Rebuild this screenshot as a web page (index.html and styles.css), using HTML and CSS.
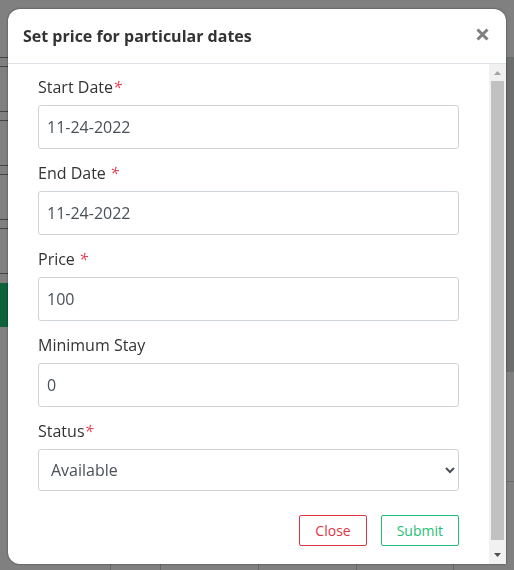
FILE: index.html
```html
<!DOCTYPE html>
<html lang="en">
<head>
  <meta charset="UTF-8" />
  <meta name="viewport" content="width=device-width, initial-scale=1.0"/>
  <title>Set price for particular dates</title>
  <link rel="stylesheet" href="styles.css">
</head>
<body>
  <div class="page" aria-hidden="true">
    <div class="page-top">
      <div class="page-form">
        <div class="page-field page-field-first"></div>
        <div class="page-field"></div>
        <div class="page-field"></div>
        <div class="page-field"></div>
        <div class="page-field"></div>
        <div class="page-button"></div>
      </div>
      <div class="page-side">
        <div class="page-photo"></div>
        <div class="page-line"></div>
      </div>
    </div>
    <div class="page-calendar">
      <span></span><span></span><span></span><span></span><span></span>
    </div>
  </div>

  <div class="modal" role="dialog" aria-labelledby="modalTitle">
    <div class="modal-header">
      <h1 class="modal-title" id="modalTitle">Set price for particular dates</h1>
      <button type="button" class="modal-x" aria-label="Dismiss">
        <svg width="13" height="13" viewBox="0 0 13 13"><path d="M1.5 1.5L11.5 11.5M11.5 1.5L1.5 11.5" stroke="#7f7f7f" stroke-width="3" fill="none"/></svg>
      </button>
    </div>
    <div class="modal-body">
      <form class="price-form" onsubmit="return false">
        <div class="field">
          <label for="start">Start Date<em class="required">*</em></label>
          <input id="start" type="text" value="11-24-2022" />
        </div>
        <div class="field">
          <label for="end">End Date <em class="required">*</em></label>
          <input id="end" type="text" value="11-24-2022" />
        </div>
        <div class="field">
          <label for="price">Price <em class="required">*</em></label>
          <input id="price" type="text" value="100" />
        </div>
        <div class="field">
          <label for="stay">Minimum Stay</label>
          <input id="stay" type="text" value="0" />
        </div>
        <div class="field">
          <label for="status">Status<em class="required">*</em></label>
          <select id="status">
            <option>Available</option>
            <option>Not available</option>
          </select>
        </div>
        <div class="actions">
          <button type="button" class="btn btn-close">Close</button>
          <button type="submit" class="btn btn-submit">Submit</button>
        </div>
      </form>
      <div class="scrollbar" aria-hidden="true">
        <svg width="17" height="17" viewBox="0 0 17 17"><path d="M5 11L8.5 7L12 11Z" fill="#a3a3a3"/></svg>
        <div class="scrollbar-thumb"></div>
        <svg class="scrollbar-down" width="17" height="17" viewBox="0 0 17 17"><path d="M5 6L8.5 10L12 6Z" fill="#505050"/></svg>
      </div>
    </div>
  </div>
</body>
</html>
```
FILE: styles.css
```css
* {
  box-sizing: border-box;
}
body {
  margin: 0;
  padding: 9px 8px 6px;
  font-family: "Open Sans", "Noto Sans", sans-serif;
  font-size: 16px;
  line-height: 24px;
  color: #333;
}

/* dimmed page behind the dialog */
.page {
  position: fixed;
  inset: 0;
  display: flex;
  flex-direction: column;
  overflow: hidden;
  background: #808080;
}
.page-top {
  display: flex;
  flex: 1;
  min-height: 0;
  justify-content: space-between;
}
.page-form {
  display: flex;
  flex-direction: column;
  gap: 8px;
  width: 40px;
  padding-top: 12px;
}
.page-field {
  height: 46px;
  border: 1px solid #3f4448;
  border-width: 1px 0;
}
.page-field-first {
  border-top: none;
}
.page-button {
  height: 44px;
  margin-top: 1px;
  background: #0e6239;
}
.page-side {
  width: 40px;
  padding-top: 57px;
}
.page-photo {
  height: 315px;
  background: #6b6e6d;
}
.page-line {
  height: 110px;
  border-bottom: 1px solid #6c6c6c;
}
.page-calendar {
  display: grid;
  grid-template-columns: 111px 50px 98px 98px 97px;
  height: 10px;
}
.page-calendar span {
  border-right: 1px solid #676767;
}

.modal {
  position: relative;
  background: #fff;
  border-radius: 12px 12px 0 12px;
  box-shadow: 0 0 2px rgba(0, 0, 0, 0.6);
}
.modal-header {
  display: flex;
  align-items: center;
  justify-content: space-between;
  height: 55px;
  padding: 0 17px 0 15px;
  border-bottom: 1px solid #dee2e6;
}
.modal-title {
  margin: 0;
  font-size: 16px;
  font-weight: 700;
}
.modal-x {
  display: flex;
  padding: 0;
  margin-bottom: 4px;
  border: none;
  background: none;
  cursor: pointer;
}
.modal-body {
  display: flex;
}
.price-form {
  flex: 1;
  padding: 11px 30px 18px;
}
.field {
  margin-bottom: 12px;
}
label {
  display: block;
  margin-bottom: 6px;
}
.required {
  color: #e8364a;
}
input, select {
  display: block;
  width: 100%;
  height: 44px;
  padding: 0 8px;
  border: 1px solid #ced4da;
  border-radius: 3px;
  background: #fff;
  color: #495057;
  font: inherit;
}
select {
  height: 42px;
  padding: 0 0 0 8px;
}
.actions {
  display: flex;
  justify-content: flex-end;
  gap: 14px;
  padding-top: 12px;
}
.btn {
  height: 31px;
  padding: 0 15px;
  border: 1px solid;
  border-radius: 2px;
  background: #fff;
  font: inherit;
  font-size: 14px;
  cursor: pointer;
}
.btn-close {
  border-color: #dc3545;
  color: #dc3545;
}
.btn-submit {
  border-color: #1fbf75;
  color: #1fbf75;
}

.scrollbar {
  display: flex;
  flex-direction: column;
  width: 17px;
  background: #f1f1f1;
}
.scrollbar-thumb {
  flex: 1;
  margin: 0 2px;
  background: #c1c1c1;
}
.scrollbar-down {
  margin-top: 7px;
}
```
